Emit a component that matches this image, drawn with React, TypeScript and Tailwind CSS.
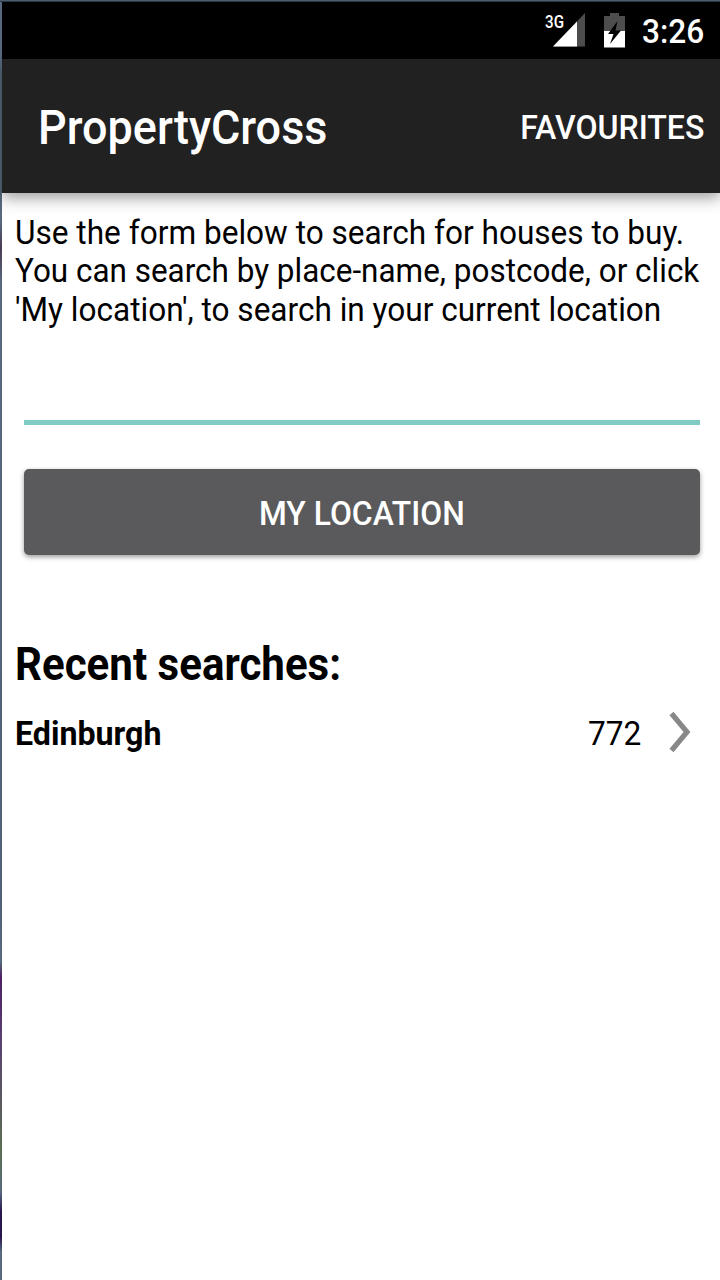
import React from "react";

function StatusBar() {
  return (
    <div className="flex h-[57px] items-center justify-end bg-black pr-4 text-white">
      <svg className="mr-[18px] h-[40px] w-[42px]" viewBox="0 0 42 40">
        <text x="1" y="17" fill="#fff" fontSize="19" fontWeight="500" textLength="19" lengthAdjust="spacingAndGlyphs">3G</text>
        <path d="M41 2V35.500H9Z" fill="#4d4d4d" />
        <path d="M33 10.500V35.500H9Z" fill="#fff" />
      </svg>
      <svg className="mr-[16px] h-[36px] w-[22px]" viewBox="0 0 22 36">
        <path d="M6 0h9v3h6v31H0V3h6Z" fill="#4d4d4d" />
        <path d="M0 18h21v16.500H0Z" fill="#fff" />
        <path d="M13.500 8L4 21h5.500L6 31L17 17.500h-5.500Z" fill="#000" />
      </svg>
      <span className="w-[62px] origin-left scale-x-[0.93] text-[34px] font-medium leading-none">3:26</span>
    </div>
  );
}

export default function App() {
  return (
    <div className="flex h-[1280px] w-[720px] flex-col overflow-hidden bg-white font-['Roboto',sans-serif] text-black">
      <div className="h-[2px] shrink-0 bg-linear-to-b from-[#5b7085] to-[#1c2631]" />
      <div className="flex min-h-0 flex-1">
        <div className="w-[1.5px] shrink-0 bg-[linear-gradient(to_bottom,#56697d_0px,#56697d_220px,#4a3c55_245px,#56697d_280px,#4f6178_900px,#56697d_960px,#4d1f66_975px,#5a4270_1040px,#5a6f52_1150px,#56697d_1190px,#281650_1210px,#281650_1235px,#56697d_1250px)]" />
        <div className="flex min-w-0 flex-1 flex-col">
          <StatusBar />
          <header className="flex h-[134px] shrink-0 items-center justify-between bg-[#212121] pl-[36px] pr-4 text-white shadow-[0_5px_14px_rgba(0,0,0,0.38)]">
            <h1 className="origin-left scale-x-[0.937] pt-[4px] text-[48px] font-medium leading-none">PropertyCross</h1>
            <span className="origin-right scale-x-[0.943] pt-[2px] text-[34px] font-medium leading-none">FAVOURITES</span>
          </header>
          <main className="flex flex-col pl-[13px]">
            <p className="mt-[20px] flex flex-col whitespace-pre text-[34px] leading-[38.300px]">
              <span className="origin-left scale-x-[0.929]">Use the form below to search for houses to buy.</span>
              <span className="origin-left scale-x-[0.925]">You can search by place-name, postcode, or click</span>
              <span className="origin-left scale-x-[0.928]">'My location', to search in your current location</span>
            </p>
            <div className="ml-[9px] mt-[92px] h-[5px] w-[676px] bg-[#80cbc4]" />
            <button className="ml-[9px] mt-[44px] flex h-[86px] w-[676px] items-center justify-center rounded-[5px] bg-[#5a5a5c] pt-[3px] text-[34px] font-medium leading-none text-white shadow-[0_2px_5px_rgba(0,0,0,0.4)]">
              <span className="scale-x-[0.937]">MY LOCATION</span>
            </button>
            <h2 className="mt-[81px] origin-left scale-x-[0.895] text-[47px] font-bold leading-[56px]">Recent searches:</h2>
            <div className="mt-[17px] flex h-[48px] items-center">
              <span className="flex-1 origin-left scale-x-[0.946] text-[34px] font-bold leading-none">Edinburgh</span>
              <span className="origin-right scale-x-[0.93] text-[34px] leading-none">772</span>
              <svg className="mb-[2px] ml-[26px] mr-[27px] h-[44px] w-[26px]" viewBox="0 0 26 44" fill="none">
                <path d="M4.500 3.500L20 22L4.500 40.500" stroke="#888" strokeWidth="5.200" />
              </svg>
            </div>
          </main>
        </div>
      </div>
    </div>
  );
}
